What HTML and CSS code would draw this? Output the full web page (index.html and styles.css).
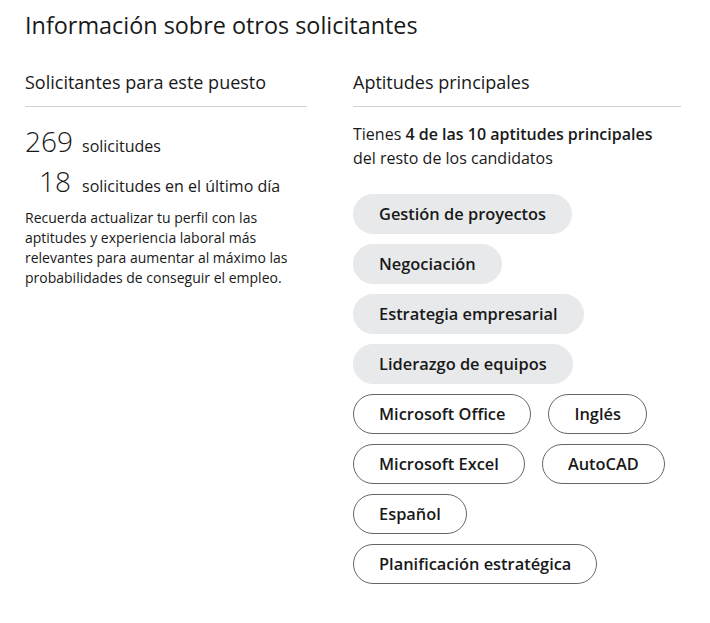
FILE: index.html
```html
<!DOCTYPE html>
<html lang="es">
    <head>
        <meta charset="UTF-8" />
        <meta name="viewport" content="width=device-width, initial-scale=1.0" />
        <title>Información sobre otros solicitantes</title>
        <link rel="stylesheet" href="styles.css">
    </head>
    <body>
        <section class="insights">
            <h1>Información sobre otros solicitantes</h1>
            <div class="columns">
                <div class="column">
                    <h2>Solicitantes para este puesto</h2>
                    <div class="stats">
                        <div class="stat">
                            <span class="stat-num">269</span>
                            <span class="stat-label">solicitudes</span>
                        </div>
                        <div class="stat">
                            <span class="stat-num">18</span>
                            <span class="stat-label">solicitudes en el último día</span>
                        </div>
                    </div>
                    <p class="hint">
                        Recuerda actualizar tu perfil con las aptitudes y experiencia laboral más relevantes para aumentar al máximo las probabilidades de conseguir el empleo.
                    </p>
                </div>
                <div class="column">
                    <h2>Aptitudes principales</h2>
                    <p class="summary">Tienes <strong>4 de las 10 aptitudes principales</strong><br>del resto de los candidatos</p>
                    <ul class="skills">
                        <li class="skill matched">Gestión de proyectos</li>
                        <li class="skill matched">Negociación</li>
                        <li class="skill matched">Estrategia empresarial</li>
                        <li class="skill matched">Liderazgo de equipos</li>
                        <li class="skill">Microsoft Office</li>
                        <li class="skill">Inglés</li>
                        <li class="skill">Microsoft Excel</li>
                        <li class="skill">AutoCAD</li>
                        <li class="skill">Español</li>
                        <li class="skill">Planificación estratégica</li>
                    </ul>
                </div>
            </div>
        </section>
    </body>
</html>
```

FILE: styles.css
```css
body {
    margin: 0;
    background: #ffffff;
    color: #191919;
    font-family: "Open Sans", "Noto Sans", sans-serif;
}

.insights {
    padding: 8px 25px 0;
}

h1 {
    margin: 0;
    font-size: 23.4px;
    font-weight: 400;
    line-height: 34px;
}

.columns {
    display: grid;
    grid-template-columns: 282px 328px;
    column-gap: 46px;
    margin-top: 28px;
}

h2 {
    margin: 0;
    padding-bottom: 12px;
    border-bottom: 1px solid #d0d0d0;
    font-size: 18px;
    font-weight: 400;
    line-height: 24px;
}

.stats {
    margin-top: 16px;
    width: 282px;
}

.stat {
    display: grid;
    grid-template-columns: 46px 1fr;
    column-gap: 11px;
    align-items: baseline;
}

.stat + .stat {
    margin-top: 4px;
}

.stat-num {
    font-size: 28px;
    font-weight: 300;
    line-height: 36px;
    text-align: right;
}

.stat-label {
    font-size: 16px;
}

.hint {
    margin: 9px 0 0;
    font-size: 14px;
    line-height: 20px;
}

.summary {
    margin: 15px 0 0;
    font-size: 16px;
    line-height: 24px;
}

.summary strong {
    font-weight: 600;
}

.skills {
    list-style: none;
    margin: 24px 0 0;
    padding: 0;
    display: flex;
    flex-wrap: wrap;
    gap: 10px 17px;
    width: 328px;
}

.skill {
    box-sizing: border-box;
    height: 40px;
    padding: 0 25px;
    border: 1px solid #666666;
    border-radius: 20px;
    font-size: 16.4px;
    font-weight: 600;
    line-height: 38px;
}

.skill.matched {
    flex-basis: 100%;
    flex-grow: 0;
    max-width: max-content;
    border-color: #e8e9eb;
    background: #e8e9eb;
}
```
